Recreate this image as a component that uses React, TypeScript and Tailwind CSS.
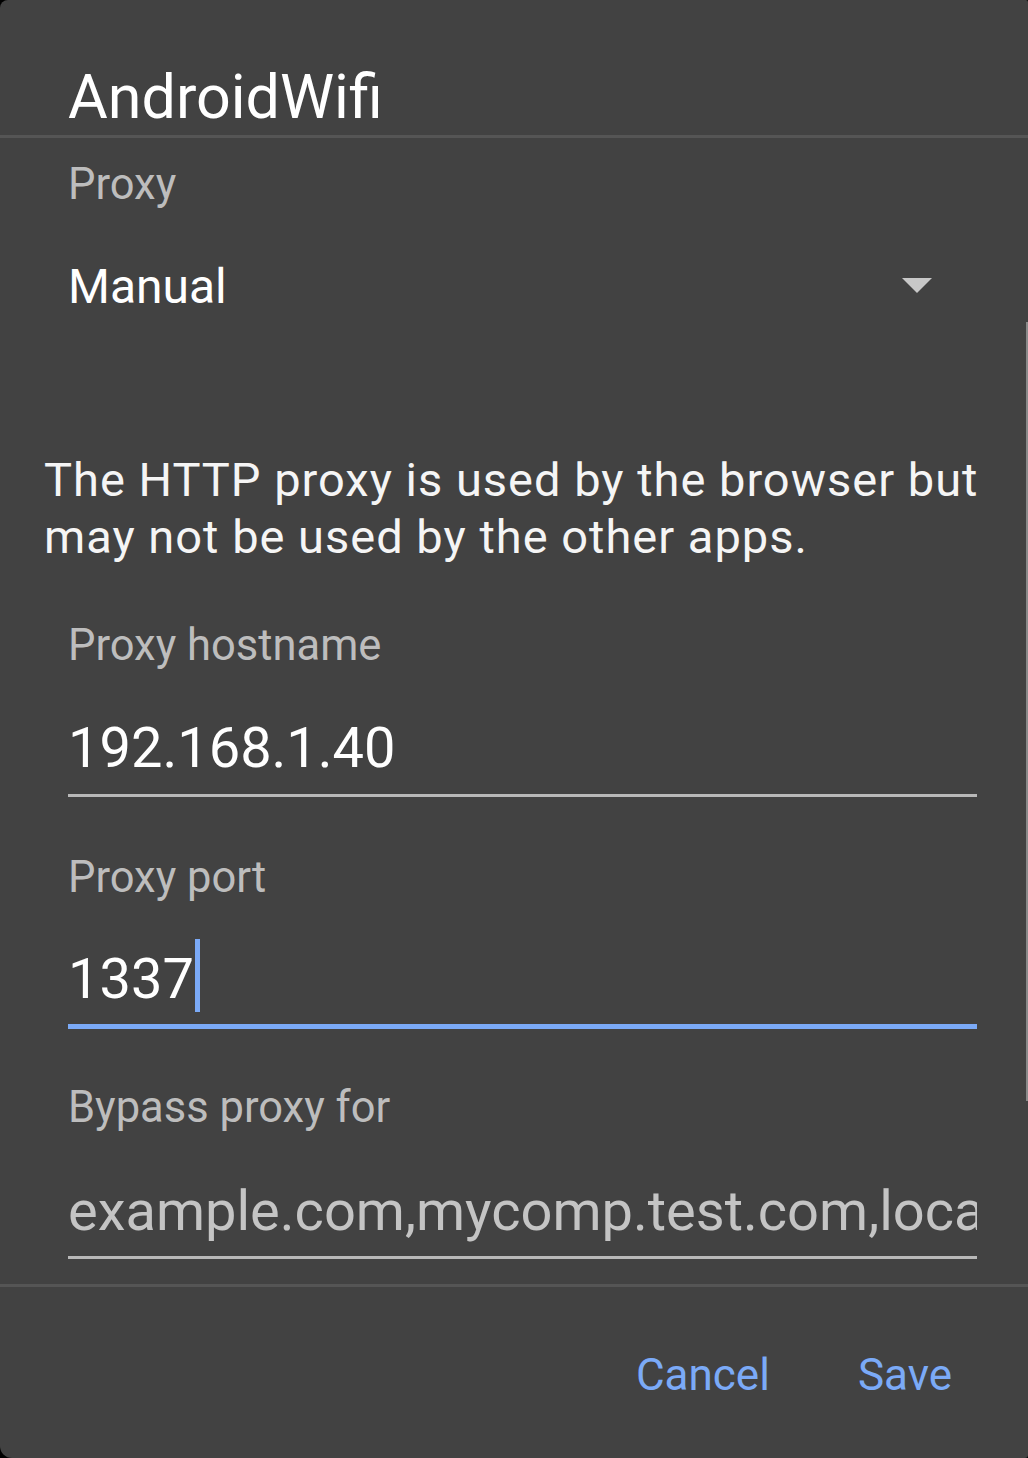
import React from "react";

function Label({ text, className = "" }: { text: string; className?: string }) {
  return (
    <div className={`pl-[68px] text-[43.5px] leading-[52px] text-[#bdbdbd] ${className}`}>{text}</div>
  );
}

export default function App() {
  return (
    <div className="w-[1028px] h-[1458px] bg-black" style={{ fontFamily: "Roboto, 'Noto Sans', sans-serif" }}>
      <div className="relative w-full h-full bg-[#424242] rounded-tl-[8px] rounded-tr-[2px] rounded-bl-[12px] rounded-br-[3px] flex flex-col">
        {/* Title */}
        <div className="pt-[62px] pl-[68px] text-[61px] leading-[70px] text-white">AndroidWifi</div>
        <div className="mt-[3px] h-[3px] bg-[#555555]" />

        {/* Proxy type */}
        <Label text="Proxy" className="mt-[21px]" />
        <div className="mt-[46px] pl-[68px] pr-[96px] flex items-center justify-between h-[60px]">
          <span className="text-[48px] leading-[60px] text-white">Manual</span>
          <svg width="30" height="15" viewBox="0 0 30 15" className="-mt-[3px]">
            <path d="M0 0 H30 L15 15 Z" fill="#c8c8c8" />
          </svg>
        </div>

        {/* Note */}
        <p className="mt-[134px] pl-[44px] text-[47px] leading-[57px] tracking-[1px] text-[#f5f5f5] whitespace-nowrap">
          The HTTP proxy is used by the browser but
          <br />
          may not be used by the other apps.
        </p>

        {/* Hostname */}
        <Label text="Proxy hostname" className="mt-[55px]" />
        <div className="ml-[68px] mr-[51px] mt-[44px] text-[56px] leading-[64px] text-white">192.168.1.40</div>
        <div className="ml-[68px] mr-[51px] mt-[14px] h-[3px] bg-[#b8b8b8]" />

        {/* Port */}
        <Label text="Proxy port" className="mt-[55px]" />
        <div className="ml-[68px] mr-[51px] mt-[43px] text-[56px] leading-[64px] text-white">
          <span className="relative">
            1337
            <span className="absolute left-[100%] ml-[1px] top-[-7px] w-[5px] h-[73px] bg-[#7baaf7]" />
          </span>
        </div>
        <div className="ml-[68px] mr-[51px] mt-[13px] h-[5px] bg-[#7baaf7]" />

        {/* Bypass */}
        <Label text="Bypass proxy for" className="mt-[53px]" />
        <div className="ml-[68px] mr-[51px] mt-[45px] text-[56px] leading-[64px] text-[#c4c4c4] overflow-hidden whitespace-nowrap">
          example.com,mycomp.test.com,localhost
        </div>
        <div className="ml-[68px] mr-[51px] mt-[13px] h-[3px] bg-[#b8b8b8]" />

        <div className="mt-[25px] h-[3px] bg-[#555555]" />

        {/* Actions */}
        <div className="mt-[62px] pr-[76px] flex justify-end gap-[88px] text-[44px] leading-[52px] text-[#7baaf7]">
          <span>Cancel</span>
          <span>Save</span>
        </div>

        {/* scrollbar */}
        <div className="absolute right-0 top-[322px] w-[2px] h-[779px] bg-[#8a8a8a]" />
      </div>
    </div>
  );
}
